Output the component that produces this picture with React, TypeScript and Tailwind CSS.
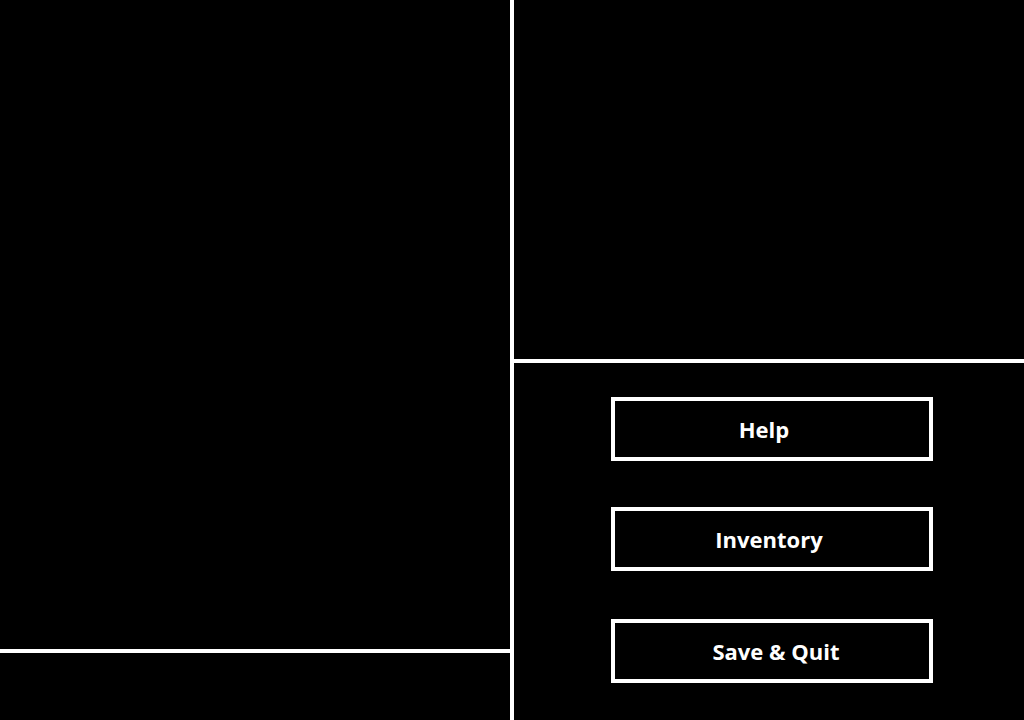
import React from "react";

const font = { fontFamily: '"Open Sans", "Noto Sans", sans-serif' };

function Btn({ label, shift }: { label: string; shift: string }) {
  return (
    <div className="w-[322px] h-[64px] border-4 border-white flex items-center justify-center">
      <span className={`text-white font-bold text-[22px] leading-none ${shift}`} style={font}>
        {label}
      </span>
    </div>
  );
}

export default function App() {
  return (
    <div className="w-[1024px] h-[720px] bg-black flex overflow-hidden">
      <div className="w-[510px] h-full flex flex-col">
        <div className="h-[653px] border-b-4 border-white"></div>
        <div className="flex-1"></div>
      </div>
      <div className="w-[4px] h-full bg-white"></div>
      <div className="flex-1 h-full flex flex-col">
        <div className="h-[363px] border-b-4 border-white"></div>
        <div className="flex-1 flex flex-col pl-[97px] pt-[34px]">
          <Btn label="Help" shift="-translate-x-[8px]" />
          <div className="h-[46px]"></div>
          <Btn label="Inventory" shift="-translate-x-[3px]" />
          <div className="h-[48px]"></div>
          <Btn label="Save & Quit" shift="translate-x-[4px]" />
        </div>
      </div>
    </div>
  );
}
